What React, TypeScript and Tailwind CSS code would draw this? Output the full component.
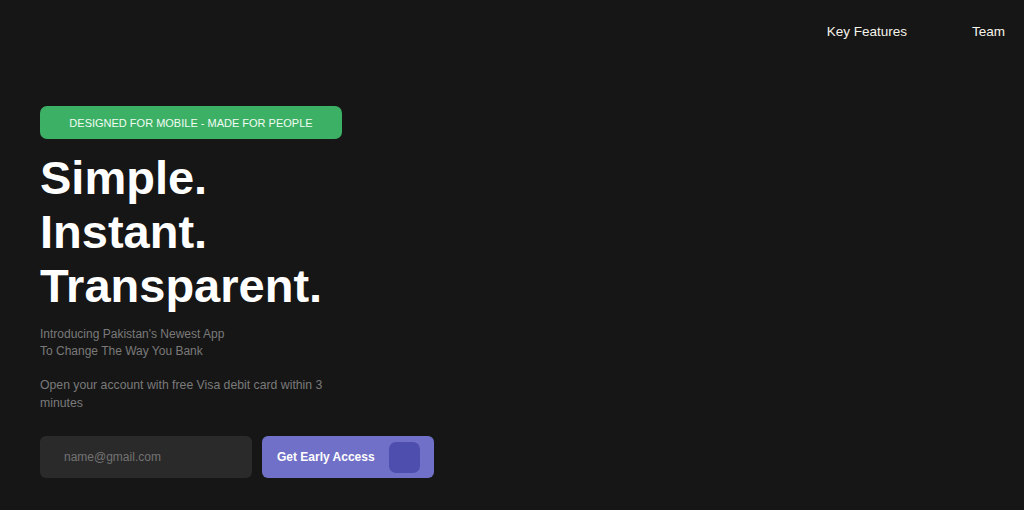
import React from 'react';

export default function App() {
  return (
    <div className="min-h-[510px] w-full bg-[#161616] font-['Liberation_Sans',Arial,sans-serif]">
      <nav className="flex justify-end gap-[65px] pt-[22px] pr-[19px] text-[13.5px] text-[#f5f3ea]">
        <a href="#">Key Features</a>
        <a href="#">Team</a>
      </nav>

      <main className="pl-[40px] pt-[64px]">
        <div className="flex h-[33px] w-[302px] items-center justify-center rounded-[7px] bg-[#3cb166] text-[11px] text-[#f2fbf3]">
          DESIGNED FOR MOBILE - MADE FOR PEOPLE
        </div>

        <h1 className="mt-[12px] text-[47px] font-bold leading-[54px] text-white">
          Simple.
          <br />
          Instant.
          <br />
          Transparent.
        </h1>

        <p className="mt-[13px] text-[12px] leading-[17px] text-[#7a7a7a]">
          Introducing Pakistan's Newest App
          <br />
          To Change The Way You Bank
        </p>

        <p className="mt-[16px] w-[300px] text-[12.25px] leading-[18px] text-[#7a7a7a]">
          Open your account with free Visa debit card within 3 minutes
        </p>

        <div className="mt-[24px] flex gap-[10px]">
          <input
            type="email"
            placeholder="name@gmail.com"
            className="h-[42px] w-[212px] rounded-[6px] bg-[#2a2a2a] pl-[24px] text-[12px] text-white outline-none placeholder:text-[#737373]"
          />
          <button className="flex h-[42px] w-[172px] items-center justify-between rounded-[6px] bg-[#7070c8] pl-[15px] pr-[14px] text-[12px] font-bold text-white">
            Get Early Access
            <span className="h-[31px] w-[31px] rounded-[7px] bg-[#4e4eae]" />
          </button>
        </div>
      </main>
    </div>
  );
}
